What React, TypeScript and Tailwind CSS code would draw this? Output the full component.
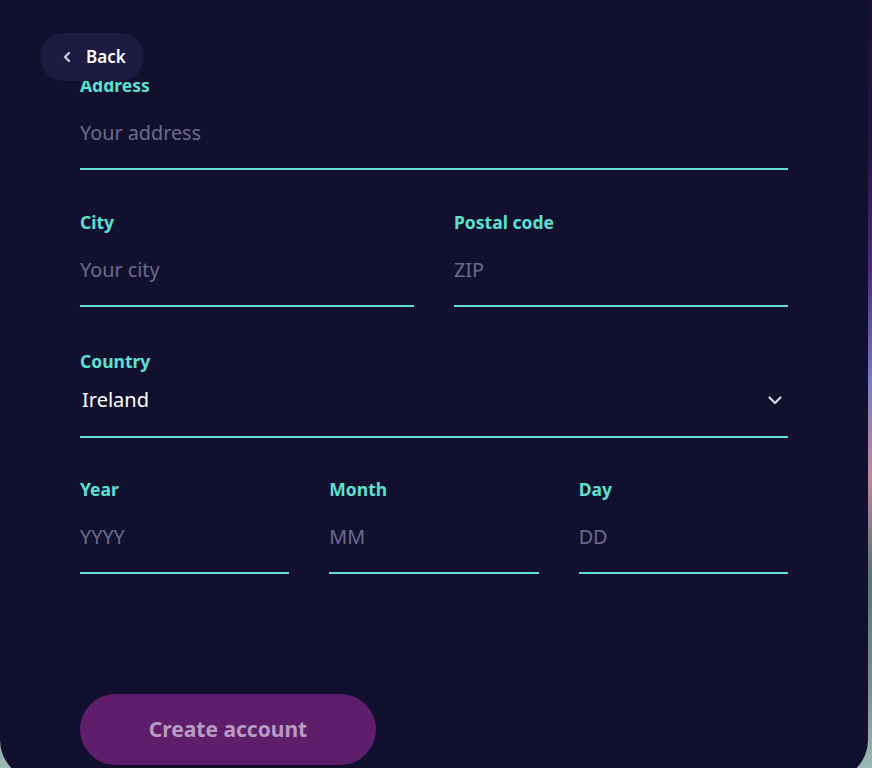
import React from "react";

const font = { fontFamily: '"Noto Sans", "Open Sans", sans-serif' };

function Label({ children }: { children: React.ReactNode }) {
  return (
    <div className="h-6 text-[17.5px] font-bold leading-6 text-[#5de0d0]">{children}</div>
  );
}

function Field({ label, placeholder }: { label: string; placeholder: string }) {
  return (
    <div className="flex flex-col">
      <Label>{label}</Label>
      <div className="flex h-[73px] items-center border-b-2 border-[#62dcd6]">
        <span className="text-[19.8px] text-[#6d6a8d]">{placeholder}</span>
      </div>
    </div>
  );
}

export default function App() {
  return (
    <div
      className="relative h-[768px] w-[872px] overflow-hidden bg-[linear-gradient(180deg,#1a1030_0%,#241440_18%,#4a2a78_35%,#7c7cc4_50%,#c48696_62%,#5a7478_75%,#6e8c8e_88%,#9ab8b4_100%)]"
      style={font}
    >
      <div className="h-[780px] w-[868px] rounded-b-[40px] bg-[#11112f]">
        <div className="flex flex-col px-20 pt-[73px]">
          <Field label="Address" placeholder="Your address" />
          <div className="mt-10 grid grid-cols-2 gap-10">
            <Field label="City" placeholder="Your city" />
            <Field label="Postal code" placeholder="ZIP" />
          </div>
          <div className="mt-[42px] flex flex-col">
            <Label>Country</Label>
            <div className="flex h-[65px] items-center justify-between border-b-2 border-[#62dcd6] pb-[10px] pl-[2px] pr-[5px]">
              <span className="text-[20px] text-white">Ireland</span>
              <svg width="16" height="16" viewBox="0 0 16 16" fill="none" stroke="#d6d6e6" strokeWidth="2.2" strokeLinecap="round" strokeLinejoin="round">
                <path d="M2.5 5.5L8 11l5.5-5.5" />
              </svg>
            </div>
          </div>
          <div className="mt-[39px] grid grid-cols-3 gap-10">
            <Field label="Year" placeholder="YYYY" />
            <Field label="Month" placeholder="MM" />
            <Field label="Day" placeholder="DD" />
          </div>
          <div className="mt-[120px]">
            <button className="h-[71px] w-[296px] rounded-full bg-[#5f1e6c] text-[21px] font-bold text-[#b79bc2]">
              Create account
            </button>
          </div>
        </div>
      </div>
      <button className="absolute left-10 top-[33px] flex h-12 w-[104px] items-center gap-[14px] rounded-full bg-[#1d1b42] pl-[22px]">
        <svg width="10" height="12" viewBox="0 0 10 12" fill="none" stroke="#c8c8d8" strokeWidth="2.4" strokeLinecap="round" strokeLinejoin="round">
          <path d="M7 2L3 6l4 4" />
        </svg>
        <span className="text-[17px] font-semibold text-white">Back</span>
      </button>
    </div>
  );
}
